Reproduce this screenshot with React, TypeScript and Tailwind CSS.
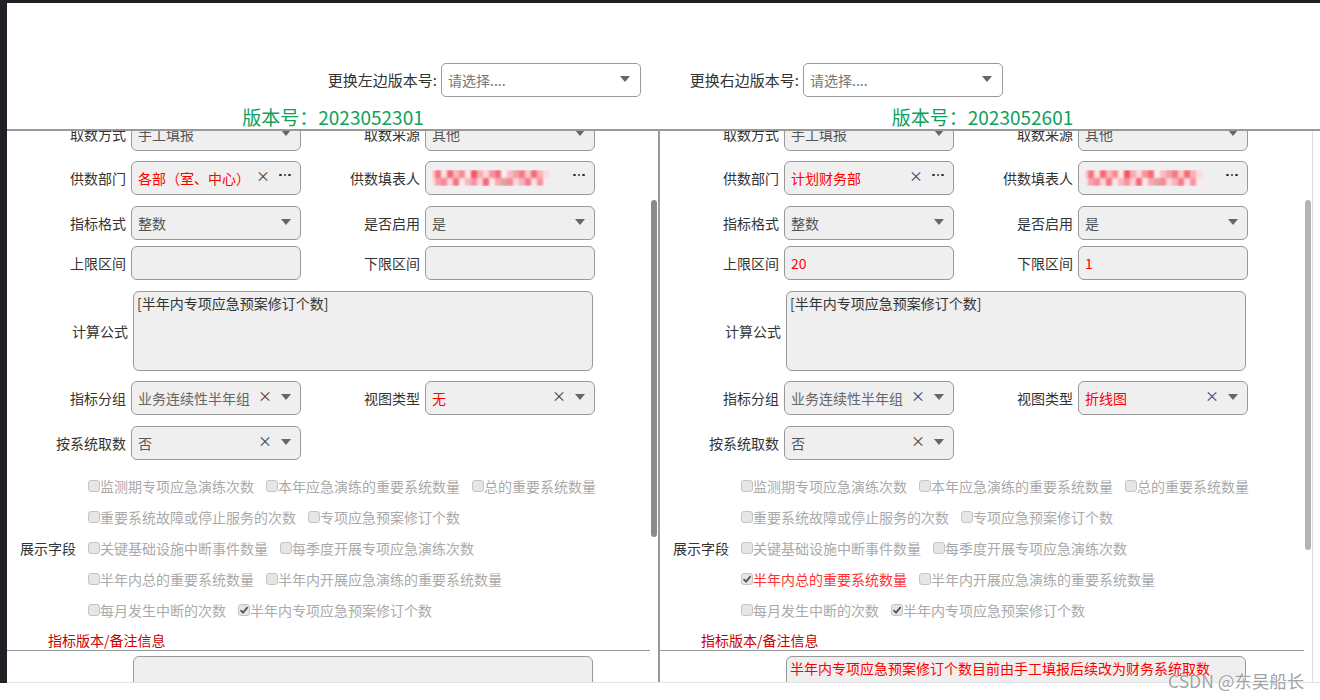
import React from "react";

type Item = { text: string; checked?: boolean; red?: boolean };

const leftChecks: Item[][] = [
  [{ text: "监测期专项应急演练次数" }, { text: "本年应急演练的重要系统数量" }, { text: "总的重要系统数量" }],
  [{ text: "重要系统故障或停止服务的次数" }, { text: "专项应急预案修订个数" }],
  [{ text: "关键基础设施中断事件数量" }, { text: "每季度开展专项应急演练次数" }],
  [{ text: "半年内总的重要系统数量" }, { text: "半年内开展应急演练的重要系统数量" }],
  [{ text: "每月发生中断的次数" }, { text: "半年内专项应急预案修订个数", checked: true }],
];

const rightChecks: Item[][] = [
  [{ text: "监测期专项应急演练次数" }, { text: "本年应急演练的重要系统数量" }, { text: "总的重要系统数量" }],
  [{ text: "重要系统故障或停止服务的次数" }, { text: "专项应急预案修订个数" }],
  [{ text: "关键基础设施中断事件数量" }, { text: "每季度开展专项应急演练次数" }],
  [{ text: "半年内总的重要系统数量", checked: true, red: true }, { text: "半年内开展应急演练的重要系统数量" }],
  [{ text: "每月发生中断的次数" }, { text: "半年内专项应急预案修订个数", checked: true }],
];

// mosaic of the hidden user name, two rows of cells
const blurTop = [
  "bg-[#fbd1d6]", "bg-[#f47381]", "bg-[#fbe0e3]", "bg-[#f36777]", "bg-[#f9b6bf]", "bg-[#f58a96]",
  "bg-[#fde6e9]", "bg-[#f0566a]", "bg-[#f8aab3]", "bg-[#fbd6da]", "bg-[#f7939f]", "bg-[#f36b7b]",
  "bg-[#fdeef0]", "bg-[#f9bcc4]", "bg-[#eda0a8]", "bg-[#f47a88]", "bg-[#fbc9cf]", "bg-[#f36b7b]",
  "bg-[#f9b2bb]", "bg-[#fcd9dd]",
];
const blurBottom = [
  "bg-[#fce4e7]", "bg-[#f7a1ab]", "bg-[#f58a96]", "bg-[#fbd6da]", "bg-[#f47381]", "bg-[#fde6e9]",
  "bg-[#f9b6bf]", "bg-[#f7939f]", "bg-[#fbd1d6]", "bg-[#f36777]", "bg-[#fde9eb]", "bg-[#f8aab3]",
  "bg-[#e0a0a6]", "bg-[#f58a96]", "bg-[#fbd6da]", "bg-[#f9b2bb]", "bg-[#f47a88]", "bg-[#fce0e4]",
  "bg-[#f7939f]", "bg-[#fde8ea]",
];

function Caret() {
  return (
    <span className="w-[12px] flex justify-center -translate-y-[1px]">
      <span className="w-0 h-0 border-l-[5px] border-r-[5px] border-t-[6px] border-l-transparent border-r-transparent border-t-[#666]" />
    </span>
  );
}

function Clear() {
  return <span className="w-[14px] text-center text-[14px] leading-[14px] text-[#444] mr-[8px] -translate-y-[3px]">×</span>;
}

function Dots() {
  return (
    <span className="w-[14px] flex justify-center gap-[2px] -translate-y-[3px]">
      <span className="w-[2.5px] h-[2.5px] rounded-full bg-[#333]" />
      <span className="w-[2.5px] h-[2.5px] rounded-full bg-[#333]" />
      <span className="w-[2.5px] h-[2.5px] rounded-full bg-[#333]" />
    </span>
  );
}

function Blurred() {
  return (
    <div className="flex flex-col -ml-[3px] blur-[1px]">
      <div className="flex h-[8px]">
        {blurTop.map((c, i) => (
          <span key={i} className={`w-[6px] h-full ${c}`} />
        ))}
      </div>
      <div className="flex h-[8px]">
        {blurBottom.map((c, i) => (
          <span key={i} className={`w-[6px] h-full ${c}`} />
        ))}
      </div>
    </div>
  );
}

function Box({
  value,
  red,
  muted,
  clear,
  caret,
  dots,
  children,
}: {
  value?: string;
  red?: boolean;
  muted?: boolean;
  clear?: boolean;
  caret?: boolean;
  dots?: boolean;
  children?: React.ReactNode;
}) {
  return (
    <div className="ml-[5px] w-[170px] h-[34px] rounded-[6px] border border-[#999] bg-[#efefef] flex items-center pl-[6px] pr-[8px] text-[14px] leading-[18px]">
      <div className={`flex-1 min-w-0 truncate ${red ? "text-[#f00]" : muted ? "text-[#666]" : "text-[#555]"}`}>
        {children ?? value}
      </div>
      {clear && <Clear />}
      {dots && <Dots />}
      {caret && <Caret />}
    </div>
  );
}

function Field({ label, children }: { label: string; children: React.ReactNode }) {
  return (
    <div className="flex items-center w-[294px]">
      <div className="w-[119px] text-right text-[14px] leading-[18px] text-[#333]">{label}</div>
      {children}
    </div>
  );
}

function Check({ checked }: { checked?: boolean }) {
  return (
    <span className="w-[12px] h-[12px] rounded-[3px] border border-[#c4c4c4] bg-[#e6e6e6] flex items-center justify-center shrink-0">
      {checked && (
        <svg width="10" height="10" viewBox="0 0 10 10">
          <path d="M1.5 5.2 L4 7.6 L8.6 2.2" stroke="#555" strokeWidth="1.8" fill="none" />
        </svg>
      )}
    </span>
  );
}

type PanelData = {
  dept: string;
  upper: string;
  lower: string;
  view: string;
  checks: Item[][];
  remark: string;
  thumb: string;
};

function Panel({ d, className }: { d: PanelData; className: string }) {
  return (
    <div className={`relative h-full overflow-hidden ${className}`}>
      <div className="mt-[-14px]">
        <div className="flex">
          <Field label="取数方式">
            <Box value="手工填报" caret />
          </Field>
          <Field label="取数来源">
            <Box value="其他" caret />
          </Field>
        </div>

        <div className="flex mt-[10px]">
          <Field label="供数部门">
            <Box value={d.dept} red clear dots />
          </Field>
          <Field label="供数填表人">
            <Box dots>
              <Blurred />
            </Box>
          </Field>
        </div>

        <div className="flex mt-[11px]">
          <Field label="指标格式">
            <Box value="整数" caret />
          </Field>
          <Field label="是否启用">
            <Box value="是" caret />
          </Field>
        </div>

        <div className="flex mt-[6px]">
          <Field label="上限区间">
            <Box value={d.upper} red />
          </Field>
          <Field label="下限区间">
            <Box value={d.lower} red />
          </Field>
        </div>

        <div className="flex items-center mt-[11px]">
          <div className="w-[121px] text-right text-[14px] leading-[18px] text-[#333]">计算公式</div>
          <div className="ml-[5px] w-[460px] h-[80px] rounded-[6px] border border-[#999] bg-[#efefef] px-[3px] pt-[2px] text-[14px] leading-[18px] text-[#333]">
            [半年内专项应急预案修订个数]
          </div>
        </div>

        <div className="flex mt-[10px]">
          <Field label="指标分组">
            <Box value="业务连续性半年组" muted clear caret />
          </Field>
          <Field label="视图类型">
            <Box value={d.view} red clear caret />
          </Field>
        </div>

        <div className="flex mt-[11px]">
          <Field label="按系统取数">
            <Box value="否" clear caret />
          </Field>
        </div>

        <div className="flex mt-[10px]">
          <div className="w-[81px] pl-[13px] flex items-center text-[14px] leading-[18px] text-[#333]">展示字段</div>
          <div className="flex flex-col">
            {d.checks.map((row, i) => (
              <div key={i} className="h-[31px] flex items-center gap-[12px]">
                {row.map((it) => (
                  <div key={it.text} className="flex items-center">
                    <Check checked={it.checked} />
                    <span className={`text-[14px] leading-[18px] ${it.red ? "text-[#f33]" : "text-[#aaa]"}`}>
                      {it.text}
                    </span>
                  </div>
                ))}
              </div>
            ))}
          </div>
        </div>

        <div className="h-[26px] pt-[7px] pl-[41px] mr-[8px] border-b border-[#999] text-[14px] leading-[16px] text-[#c00]">
          指标版本/备注信息
        </div>

        <div className="ml-[126px] mt-[5px] w-[460px] h-[60px] rounded-[6px] border border-[#999] bg-[#efefef] px-[3px] pt-[2px] text-[14px] leading-[18px] text-[#f00]">
          {d.remark}
        </div>
      </div>

      <div className={`absolute right-[1px] top-[69px] w-[6px] rounded-full ${d.thumb}`} />
    </div>
  );
}

const leftData: PanelData = {
  dept: "各部（室、中心）",
  upper: "",
  lower: "",
  view: "无",
  checks: leftChecks,
  remark: "",
  thumb: "h-[337px] bg-[#8a8a8a]",
};

const rightData: PanelData = {
  dept: "计划财务部",
  upper: "20",
  lower: "1",
  view: "折线图",
  checks: rightChecks,
  remark: "半年内专项应急预案修订个数目前由手工填报后续改为财务系统取数",
  thumb: "h-[350px] bg-[#b4b4b4]",
};

function VersionSelect({ label, labelWidth }: { label: string; labelWidth: string }) {
  return (
    <>
      <div className={`${labelWidth} flex justify-end`}>
        <span className="text-[15px] leading-[18px] text-[#333]">{label}</span>
      </div>
      <div className="ml-[4px] w-[200px] h-[34px] rounded-[5px] border border-[#999] bg-white flex items-center pl-[6px] pr-[9px]">
        <span className="flex-1 text-[14px] leading-[18px] text-[#777]">请选择....</span>
        <Caret />
      </div>
    </>
  );
}

export default function App() {
  return (
    <div className="relative w-[1320px] h-[700px] overflow-hidden bg-white font-['Noto_Sans_CJK_SC','Liberation_Sans',sans-serif]">
      <div className="h-[3px] bg-[#202124]" />
      <div className="flex h-[680px]">
        <div className="w-[7px] bg-[#202124]" />
        <div className="flex-1 flex flex-col">
          {/* Header */}
          <div className="h-[126px]">
            <div className="flex items-center pt-[60px] pl-[320px]">
              <VersionSelect label="更换左边版本号:" labelWidth="w-[110px]" />
              <div className="w-[45px]" />
              <VersionSelect label="更换右边版本号:" labelWidth="w-[113px]" />
            </div>
            <div className="grid grid-cols-[652px_653px] mt-[10px] text-[19px] leading-[20px] text-[#0e9f5b] text-center">
              <div>版本号：2023052301</div>
              <div className="pr-[6px]">版本号：2023052601</div>
            </div>
          </div>

          {/* Panels */}
          <div className="flex h-[554px] border-t-2 border-b border-t-[#999] border-b-[#e4e4e4]">
            <Panel d={leftData} className="w-[651px]" />
            <div className="w-[2px] bg-[#999]" />
            <Panel d={rightData} className="w-[653px] border-r border-[#ddd]" />
          </div>
        </div>
      </div>

      <div className="absolute left-[1168px] top-[671px] text-[17.5px] leading-[20px] text-[#a3a3a3] [text-shadow:0_0_2px_#fff]">
        CSDN @东吴船长
      </div>
    </div>
  );
}
